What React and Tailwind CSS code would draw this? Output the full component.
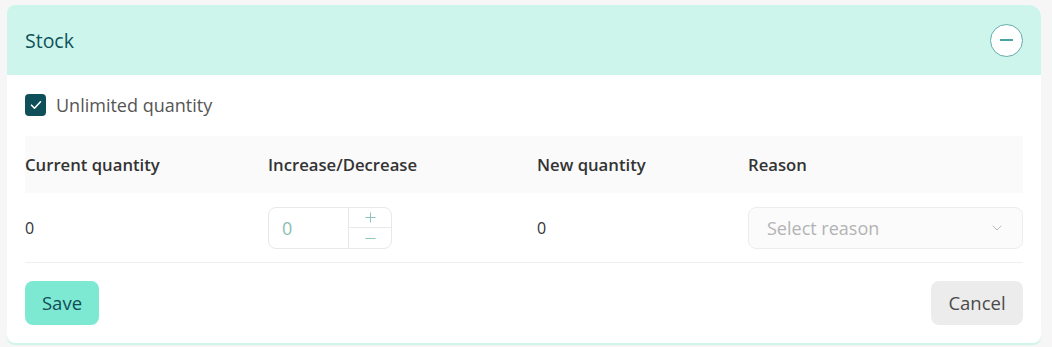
import { useState } from "react";

const StockPanel = () => {
  const [unlimited, setUnlimited] = useState(true);
  const [delta, setDelta] = useState(0);

  return (
    <div className="w-[1034px] bg-white rounded-lg rounded-tr-xl shadow-[0_2px_0_#cdf5eb] overflow-hidden">
      {/* header */}
      <div className="h-[70px] bg-[#cdf5eb] flex items-center justify-between pl-[18px] pr-[18px]">
        <h2 className="text-[19.5px] leading-[26px] pt-px text-[#0e525a]">Stock</h2>
        <button className="w-[33px] h-[33px] rounded-full bg-white border border-[#62acac] flex items-center justify-center">
          <span className="block w-[13px] h-[2px] bg-[#4aa3a3]" />
        </button>
      </div>

      <div className="px-[18px] pt-[19px] pb-[18px]">
        <label className="flex items-center gap-[10px] h-[22px] cursor-pointer">
          <span
            onClick={() => setUnlimited(!unlimited)}
            className="w-[21px] h-[22px] rounded-[4px] bg-[#0f4f5a] flex items-center justify-center"
          >
            {unlimited && (
              <svg width="12" height="10" viewBox="0 0 12 10" fill="none">
                <path d="M1.5 5.2 4.5 8.2 10.5 1.8" stroke="white" strokeWidth="1.6" strokeLinecap="round" strokeLinejoin="round" />
              </svg>
            )}
          </span>
          <span className="text-[18px] leading-[22px] text-[#555555]">Unlimited quantity</span>
        </label>

        {/* table */}
        <div className="mt-[20px]">
          <div className="grid grid-cols-[243px_269px_211px_1fr] h-[57px] items-center bg-[#fafafa] text-[16.7px] leading-[22px] font-semibold text-[#333333]">
            <div>Current quantity</div>
            <div>Increase/Decrease</div>
            <div>New quantity</div>
            <div>Reason</div>
          </div>
          <div className="grid grid-cols-[243px_269px_211px_1fr] h-[70px] items-center border-b border-[#efefef] text-[16px] leading-[22px] text-[#333333]">
            <div>0</div>
            <div>
              <div className="w-[124px] h-[42px] border border-[#e8e8e8] rounded-lg flex">
                <input
                  value={delta}
                  onChange={(e) => setDelta(e.target.value)}
                  className="w-[79px] pl-[13px] outline-none text-[18px] text-[#8bbdb5] bg-transparent"
                />
                <div className="flex-1 border-l border-[#e8e8e8] flex flex-col">
                  <button
                    onClick={() => setDelta(Number(delta) + 1)}
                    className="flex-1 flex items-center justify-center border-b border-[#e8e8e8]"
                    aria-label="Increase"
                  >
                    <svg width="11" height="11" viewBox="0 0 11 11">
                      <path d="M5.5 0.5v10M0.5 5.5h10" stroke="#8cc5bc" strokeWidth="1" />
                    </svg>
                  </button>
                  <button
                    onClick={() => setDelta(Number(delta) - 1)}
                    className="flex-1 flex items-center justify-center"
                    aria-label="Decrease"
                  >
                    <svg width="11" height="11" viewBox="0 0 11 11">
                      <path d="M0.5 6.5h10" stroke="#8cc5bc" strokeWidth="1" />
                    </svg>
                  </button>
                </div>
              </div>
            </div>
            <div>0</div>
            <div>
              <div className="h-[42px] border border-[#ececec] bg-[#fbfbfb] rounded-lg flex items-center justify-between pl-[18px] pr-[20px]">
                <span className="text-[18px] text-[#b3b3b3]">Select reason</span>
                <svg width="10" height="6" viewBox="0 0 10 6" fill="none">
                  <path d="M1 1l4 4 4-4" stroke="#b8b8b8" strokeWidth="1" strokeLinecap="round" strokeLinejoin="round" />
                </svg>
              </div>
            </div>
          </div>
        </div>

        {/* footer */}
        <div className="flex justify-between mt-[18px]">
          <button className="w-[74px] h-[44px] rounded-lg bg-[#7de9d2] text-[#114c57] text-[18.5px]">
            Save
          </button>
          <button className="w-[92px] h-[44px] rounded-lg bg-[#ececec] text-[#4a4a4a] text-[18.5px]">
            Cancel
          </button>
        </div>
      </div>
    </div>
  );
};

export default function App() {
  return (
    <div className="min-h-screen bg-[#f6f6f6] pl-[7px] pt-[5px] font-['Open_Sans',sans-serif]">
      <StockPanel />
    </div>
  );
}
